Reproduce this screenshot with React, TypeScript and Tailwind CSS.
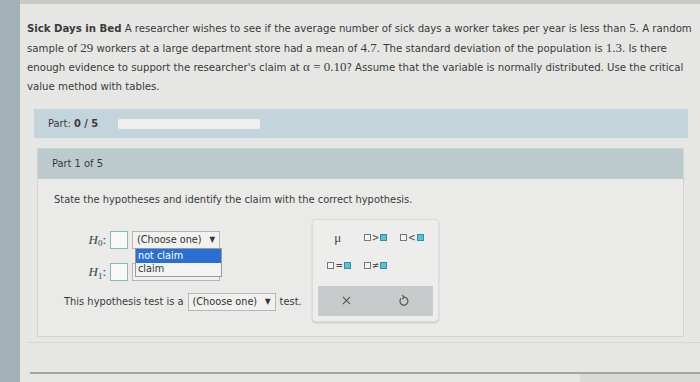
import React from 'react';

const Num = ({ children }: { children: React.ReactNode }) => (
  <span className="font-['Liberation_Serif',serif] text-[13px]">{children}</span>
);

const Box = ({ small }: { small?: boolean }) => (
  <span
    className={
      small
        ? 'inline-block w-[7px] h-[7px] border border-[#6e7a7e] bg-[#f4f4f4]'
        : 'inline-block w-[18px] h-[18px] border border-[#8cb9bd] bg-[#f7f8f8]'
    }
  />
);

const FillBox = () => <span className="inline-block w-[7px] h-[7px] border border-[#2f8fa6] bg-[#5cc0d6]" />;

const Select = ({ label }: { label: string }) => (
  <div className="h-[18px] w-[88px] shrink-0 px-[4px] flex items-center justify-between border border-[#b7b7b7] bg-[#f1f1f0] text-[10.8px] text-[#333]">
    <span>{label}</span>
    <span className="text-[8px]">▼</span>
  </div>
);

const HLabel = ({ sub }: { sub: string }) => (
  <span className="font-['Liberation_Serif',serif] italic text-[13px] text-[#444] w-[20px] text-right">
    H<sub className="text-[9px] not-italic">{sub}</sub>
    <span className="not-italic">:</span>
  </span>
);

export default function App() {
  return (
    <div className="w-[700px] h-[382px] flex overflow-hidden bg-[#e6e7e5] font-['DejaVu_Sans_Condensed','DejaVu_Sans',sans-serif] text-[#3a3a3a]">
      {/* photo edge */}
      <div className="w-[20px] shrink-0 bg-[#a2b2b6]" />

      <div className="flex-1 flex flex-col">
        <div className="h-[4px] bg-[#c9cac8]" />

        {/* problem statement */}
        <div className="pl-[7px] pt-[15px] text-[11.3px] leading-[18.6px] whitespace-nowrap">
          <b>Sick Days in Bed</b> A researcher wishes to see if the average number of sick days a worker takes per year is less than <Num>5</Num>. A random
          <br />
          sample of <Num>29</Num> workers at a large department store had a mean of <Num>4.7</Num>. The standard deviation of the population is <Num>1.3</Num>. Is there
          <br />
          enough evidence to support the researcher's claim at <Num>α = 0.10</Num>? Assume that the variable is normally distributed. Use the critical
          <br />
          value method with tables.
        </div>

        {/* progress */}
        <div className="ml-[14px] mr-[12px] mt-[13px] h-[29px] shrink-0 bg-[#c4d4db] flex items-center pl-[14px] gap-[20px] text-[11px]">
          <span>
            Part: <b>0 / 5</b>
          </span>
          <div className="w-[142px] h-[10px] rounded-[2px] bg-[#eef0f0]" />
        </div>

        {/* part card */}
        <div className="ml-[17px] mr-[16px] mt-[10px] flex flex-col border border-[#d2d3d1]">
          <div className="h-[30px] bg-[#bccacd] flex items-center pl-[14px] text-[11px]">Part 1 of 5</div>
          <div className="h-[157px] bg-[#eaeae9] pl-[16px] pt-[13px] text-[11px]">
            <div>State the hypotheses and identify the claim with the correct hypothesis.</div>

            <div className="flex mt-[10px]">
              <div className="w-[258px] shrink-0 flex flex-col">
                <div className="relative flex items-center gap-[4px] pl-[32px] mt-[11px]">
                  <HLabel sub="0" />
                  <Box />
                  <Select label="(Choose one)" />
                  <div className="absolute left-[81px] top-[18px] w-[87px] flex flex-col border border-[#9a9a9a] text-[10.8px] z-10">
                    <div className="h-[14px] bg-[#2a6fd3] text-white px-[2px] leading-[14px]">not claim</div>
                    <div className="h-[13px] bg-[#f3f3f3] text-[#333] px-[2px] leading-[12px]">claim</div>
                  </div>
                </div>
                <div className="flex items-center gap-[4px] pl-[32px] mt-[13px]">
                  <HLabel sub="1" />
                  <Box />
                  <Select label="(Choose one)" />
                </div>
                <div className="flex items-center gap-[4px] pl-[10px] mt-[11px]">
                  <span>This hypothesis test is a</span>
                  <Select label="(Choose one)" />
                  <span>test.</span>
                </div>
              </div>

              {/* palette */}
              <div className="w-[127px] h-[103px] shrink-0 rounded-[4px] border border-[#dcdcdc] bg-[#ededec] flex flex-col shadow-[0_1px_2px_rgba(0,0,0,0.15)]">
                <div className="flex-1 grid grid-cols-3 content-start pt-[13px] gap-y-[18px] px-[8px] text-[10px] text-[#444]">
                  <div className="flex justify-center font-['Liberation_Serif',serif] text-[13px] leading-[10px] pr-[3px]">μ</div>
                  <div className="flex justify-center items-center gap-[1px] leading-[10px]">
                    <Box small />&gt;<FillBox />
                  </div>
                  <div className="flex justify-center items-center gap-[1px] leading-[10px]">
                    <Box small />&lt;<FillBox />
                  </div>
                  <div className="flex justify-center items-center gap-[1px] leading-[10px]">
                    <Box small />=<FillBox />
                  </div>
                  <div className="flex justify-center items-center gap-[1px] leading-[10px]">
                    <Box small />≠<FillBox />
                  </div>
                </div>
                <div className="mx-[5px] mb-[5px] h-[30px] bg-[#c8cbcb] flex items-center justify-around text-[#555]">
                  <svg width="11" height="11" viewBox="0 0 12 12" fill="none" stroke="#555" strokeWidth="1.2">
                    <path d="M2 2 L10 10 M10 2 L2 10" />
                  </svg>
                  <svg width="12" height="13" viewBox="0 0 12 13" fill="none" stroke="#555" strokeWidth="1.2">
                    <path d="M3 4.5 A4 4 0 1 0 6 3.2" />
                    <path d="M4.2 1.2 L6.2 3.2 L4.2 5" />
                  </svg>
                </div>
              </div>
            </div>
          </div>
        </div>

        <div className="h-[5px]" />
        <div className="h-[1px] ml-[8px] bg-[#d6d7d5]" />
        <div className="flex-1" />
        <div className="h-[2px] ml-[10px] bg-[#a4a5a3]" />
        <div className="h-[8px] flex">
          <div className="flex-1" />
          <div className="w-[120px] bg-[#d9dad8]" />
        </div>
      </div>
    </div>
  );
}
